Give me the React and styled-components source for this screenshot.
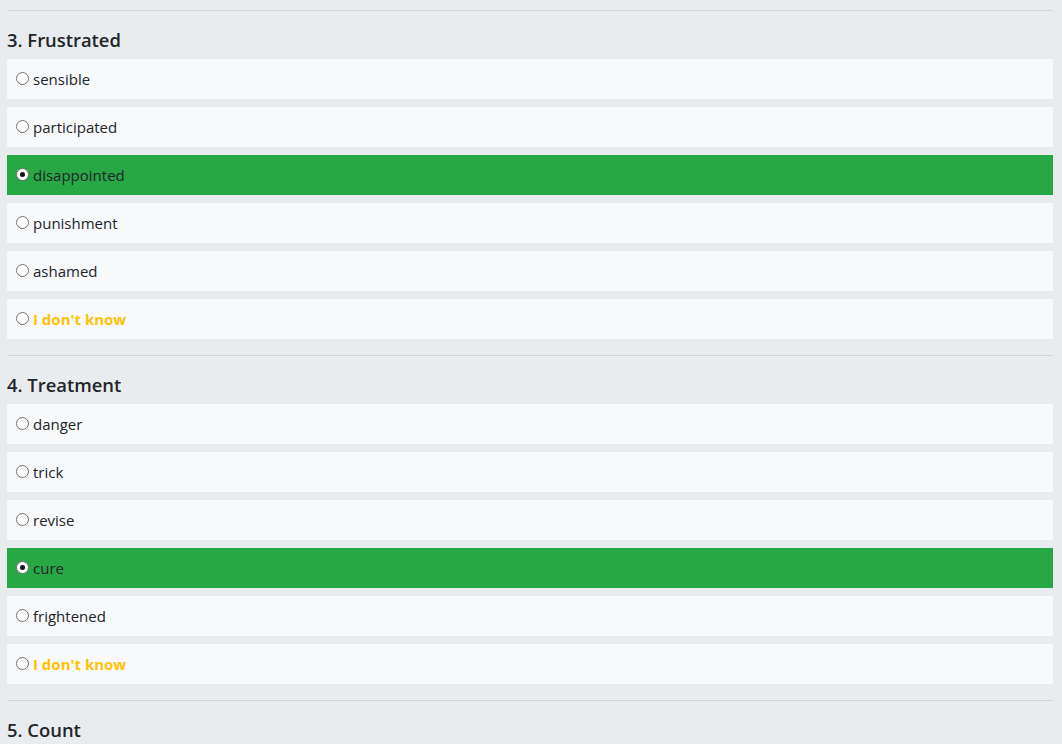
import React from 'react';
import styled, { createGlobalStyle } from 'styled-components';

const GlobalStyle = createGlobalStyle`
  body {
    margin: 0;
    background-color: #e9ecef;
    font-family: "Open Sans", "Noto Sans", sans-serif;
    color: #212529;
  }
`;

const Page = styled.div`
  padding: 10px 9px 0 7px;
`;

const Section = styled.section`
  border-top: 1px solid #d3d6d9;
  padding-bottom: 8px;
`;

const Title = styled.h5`
  margin: 17px 0 7px;
  font-size: 18.4px;
  line-height: 24px;
  font-weight: 600;
`;

const Option = styled.label`
  display: flex;
  align-items: center;
  gap: 4px;
  height: 40px;
  margin-bottom: 8px;
  padding: 0 9px;
  background-color: ${p => (p.$selected ? '#28a745' : '#f8f9fa')};
  font-size: 15px;
`;

const Radio = styled.span`
  box-sizing: border-box;
  width: 13px;
  height: 13px;
  border-radius: 50%;
  border: 1.5px solid #6f6f6f;
  background: #fff;
  display: flex;
  align-items: center;
  justify-content: center;
  margin-top: -2px;

  &::after {
    content: '';
    width: 5px;
    height: 5px;
    border-radius: 50%;
    background: ${p => (p.$checked ? '#111' : 'transparent')};
  }
`;

const Label = styled.span`
  color: ${p => (p.$unknown ? '#ffc107' : 'inherit')};
  font-weight: ${p => (p.$unknown ? 700 : 400)};
`;

const questions = [
  {
    title: '3. Frustrated',
    options: ['sensible', 'participated', 'disappointed', 'punishment', 'ashamed'],
    selected: 2,
  },
  {
    title: '4. Treatment',
    options: ['danger', 'trick', 'revise', 'cure', 'frightened'],
    selected: 3,
  },
  {
    title: '5. Count',
    options: [],
    selected: -1,
  },
];

export default function App() {
  return (
    <>
      <GlobalStyle />
      <Page>
        {questions.map(q => (
          <Section key={q.title}>
            <Title>{q.title}</Title>
            {q.options.map((opt, i) => (
              <Option key={opt} $selected={i === q.selected}>
                <Radio $checked={i === q.selected} />
                <Label>{opt}</Label>
              </Option>
            ))}
            {q.options.length > 0 && (
              <Option>
                <Radio />
                <Label $unknown>I don't know</Label>
              </Option>
            )}
          </Section>
        ))}
      </Page>
    </>
  );
}
